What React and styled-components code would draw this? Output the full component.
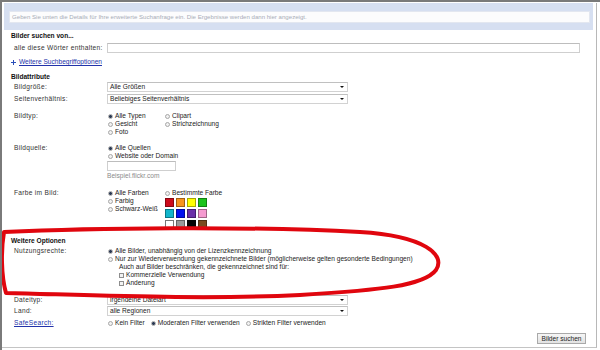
import styled, { createGlobalStyle } from "styled-components"

const GlobalStyle = createGlobalStyle`
  html, body { margin: 0; padding: 0; background: #fff; }
  body { font-family: "Liberation Sans", Arial, sans-serif; font-size: 6.6px; color: #222; }
`

const Frame = styled.div`
  position: relative;
  width: 600px;
  height: 350px;
  box-sizing: border-box;
  border-top: 2px solid #7a7a7a;
  border-left: 2px solid #7a7a7a;
  padding: 1px 3px 2px 0;
  overflow: hidden;
`

const Panel = styled.div`
  box-sizing: border-box;
  height: 345px;
  border-right: 1px solid #b8b8b8;
  border-bottom: 1px solid #c4c4c4;
  padding-right: 3px;
`

const Band = styled.div`
  margin-left: 2px;
  height: 27px;
  background: #d6dff1;
  padding: 8px 3px 0 5px;
  box-sizing: border-box;
`

const Hint = styled.div`
  height: 12px;
  background: #fcfcfd;
  border: 1px solid #e3e7f0;
  box-sizing: border-box;
  color: #a8adb8;
  font-size: 6.1px;
  line-height: 10px;
  padding-left: 2px;
  white-space: nowrap;
  overflow: hidden;
`

const Body = styled.div`
  padding-left: 9px;
  padding-right: 7px;
`

const Heading = styled.div`
  font-weight: bold;
  line-height: 8px;
  margin-top: ${p => p.$top}px;
  color: #111;
`

const Row = styled.div`
  display: grid;
  grid-template-columns: 96px 1fr;
  align-items: ${p => (p.$top ? "start" : "center")};
  min-height: ${p => p.$h || 8}px;
  margin-top: ${p => p.$mt || 0}px;
`

const Label = styled.div`
  padding-left: 3px;
  line-height: 8px;
  letter-spacing: 0.3px;
  white-space: nowrap;
  color: #333;
`

const LinkLabel = styled(Label)`
  color: #2233aa;
  text-decoration: underline;
`

const TextInput = styled.div`
  height: 10px;
  width: ${p => p.$w}px;
  box-sizing: border-box;
  border: 1px solid #cfcfcf;
  border-top-color: #bdbdbd;
  background: #fff;
  margin-top: ${p => p.$mt || 0}px;
`

const Select = styled.div`
  position: relative;
  height: 10px;
  width: 241px;
  box-sizing: border-box;
  border: 1px solid #d2d2d2;
  border-top-color: #c0c0c0;
  line-height: 8px;
  padding-left: 2px;
  &::after {
    content: "";
    position: absolute;
    right: 3px;
    top: 3px;
    border-left: 2px solid transparent;
    border-right: 2px solid transparent;
    border-top: 2px solid #111;
  }
`

const Columns = styled.div`
  display: grid;
  grid-template-columns: 57px 1fr;
  align-items: start;
`

const Stack = styled.div`
  display: flex;
  flex-direction: column;
`

const OptionLine = styled.label`
  display: flex;
  align-items: center;
  height: 8px;
  line-height: 8px;
  white-space: nowrap;
  padding-left: ${p => p.$indent || 1}px;
`

const Radio = styled.span`
  width: 5px;
  height: 5px;
  border-radius: 50%;
  box-sizing: border-box;
  border: 1px solid #a7a7a7;
  background: ${p => (p.$on ? "radial-gradient(circle, #2b3a55 0 1.4px, #e8edf4 1.6px)" : "#f1f1f1")};
  margin-right: 2px;
  flex: none;
`

const Check = styled.span`
  width: 5px;
  height: 5px;
  box-sizing: border-box;
  border: 1px solid #8e8e8e;
  background: #f3f3f3;
  margin-right: 2px;
  flex: none;
`

const Example = styled.div`
  color: #8a8a8a;
  line-height: 8px;
  margin-top: 1px;
`

const MoreLink = styled.div`
  display: flex;
  align-items: center;
  line-height: 8px;
  margin-top: 4px;
  color: #2233aa;
  a { text-decoration: underline; color: inherit; }
`

const Plus = styled.span`
  width: 5px;
  height: 5px;
  position: relative;
  margin-right: 3px;
  &::before, &::after {
    content: "";
    position: absolute;
    background: #2a4fb8;
  }
  &::before { left: 0; top: 2px; width: 5px; height: 1px; }
  &::after { left: 2px; top: 0; width: 1px; height: 5px; }
`

const Swatches = styled.div`
  display: grid;
  grid-template-columns: repeat(4, 9px);
  grid-auto-rows: 9px;
  gap: 2px;
  margin-top: 1px;
  padding-left: 1px;
`

const Swatch = styled.span`
  background: ${p => p.$c};
  box-sizing: border-box;
  border: 1px solid ${p => (p.$c === "#ffffff" ? "#777" : "rgba(0,0,0,0.35)")};
`

const Inline = styled.div`
  display: flex;
  gap: 5px;
`

const Footer = styled.div`
  display: flex;
  justify-content: flex-end;
  margin-top: 6px;
  padding-right: 0;
`

const Button = styled.div`
  height: 11px;
  width: 49px;
  box-sizing: border-box;
  border: 1px solid #a9a9a9;
  background: linear-gradient(#f6f6f6, #e2e2e2);
  text-align: center;
  line-height: 9px;
  color: #222;
`

const Marker = styled.svg`
  position: absolute;
  left: -2px;
  top: -2px;
  pointer-events: none;
`

const colours = [
  "#cc0a1a", "#f7931e", "#ffff00", "#1cc31c",
  "#11b6cc", "#0010f0", "#6b2fa8", "#f59ad0",
  "#ffffff", "#9a9a9a", "#050505", "#7a4a1e",
]

export default function App() {
  return (
    <>
      <GlobalStyle />
      <Frame>
        <Panel>
          <Band>
            <Hint>Geben Sie unten die Details für Ihre erweiterte Suchanfrage ein. Die Ergebnisse werden dann hier angezeigt.</Hint>
          </Band>
          <Body>
            <Heading $top={2}>Bilder suchen von...</Heading>
            <Row $h={12} $mt={2}>
              <Label>alle diese Wörter enthalten:</Label>
              <TextInput $w={473} />
            </Row>
            <MoreLink>
              <Plus />
              <a>Weitere Suchbegriffoptionen</a>
            </MoreLink>

            <Heading $top={7}>Bildattribute</Heading>
            <Row $h={12}>
              <Label>Bildgröße:</Label>
              <Select>Alle Größen</Select>
            </Row>
            <Row $h={12}>
              <Label>Seitenverhältnis:</Label>
              <Select>Beliebiges Seitenverhältnis</Select>
            </Row>

            <Row $top $mt={7}>
              <Label>Bildtyp:</Label>
              <Columns>
                <Stack>
                  <OptionLine><Radio $on />Alle Typen</OptionLine>
                  <OptionLine><Radio />Gesicht</OptionLine>
                  <OptionLine><Radio />Foto</OptionLine>
                </Stack>
                <Stack>
                  <OptionLine><Radio />Clipart</OptionLine>
                  <OptionLine><Radio />Strichzeichnung</OptionLine>
                </Stack>
              </Columns>
            </Row>

            <Row $top $mt={8}>
              <Label>Bildquelle:</Label>
              <Stack>
                <OptionLine><Radio $on />Alle Quellen</OptionLine>
                <OptionLine><Radio />Website oder Domain</OptionLine>
                <TextInput $w={69} $mt={1} />
                <Example>Beispiel.flickr.com</Example>
              </Stack>
            </Row>

            <Row $top $mt={9}>
              <Label>Farbe im Bild:</Label>
              <Columns>
                <Stack>
                  <OptionLine><Radio $on />Alle Farben</OptionLine>
                  <OptionLine><Radio />Farbig</OptionLine>
                  <OptionLine><Radio />Schwarz-Weiß</OptionLine>
                </Stack>
                <Stack>
                  <OptionLine><Radio />Bestimmte Farbe</OptionLine>
                  <Swatches>
                    {colours.map(c => <Swatch key={c} $c={c} />)}
                  </Swatches>
                </Stack>
              </Columns>
            </Row>

            <Heading $top={8}>Weitere Optionen</Heading>
            <Row $top $mt={2}>
              <Label>Nutzungsrechte:</Label>
              <Stack>
                <OptionLine><Radio $on />Alle Bilder, unabhängig von der Lizenzkennzeichnung</OptionLine>
                <OptionLine><Radio />Nur zur Wiederverwendung gekennzeichnete Bilder (möglicherweise gelten gesonderte Bedingungen)</OptionLine>
                <OptionLine $indent={12}>Auch auf Bilder beschränken, die gekennzeichnet sind für:</OptionLine>
                <OptionLine $indent={12}><Check />Kommerzielle Verwendung</OptionLine>
                <OptionLine $indent={12}><Check />Änderung</OptionLine>
              </Stack>
            </Row>

            <Row $h={11} $mt={7}>
              <Label>Dateityp:</Label>
              <Select>irgendeine Dateiart</Select>
            </Row>
            <Row $h={11}>
              <Label>Land:</Label>
              <Select>alle Regionen</Select>
            </Row>
            <Row $mt={3}>
              <LinkLabel>SafeSearch:</LinkLabel>
              <Inline>
                <OptionLine><Radio />Kein Filter</OptionLine>
                <OptionLine><Radio $on />Moderaten Filter verwenden</OptionLine>
                <OptionLine><Radio />Strikten Filter verwenden</OptionLine>
              </Inline>
            </Row>

            <Footer>
              <Button>Bilder suchen</Button>
            </Footer>
          </Body>
        </Panel>

        <Marker width="600" height="350" viewBox="0 0 600 350">
          <path
            d="M 4 232 C 90 228, 250 226, 360 232 C 425 236, 446 255, 436 270 C 424 286, 380 290, 300 295 C 200 300, 90 295, 6 293 C 1 275, 1 250, 4 232 Z"
            fill="none"
            stroke="#e0060e"
            strokeWidth="4"
            strokeLinejoin="round"
          />
        </Marker>
      </Frame>
    </>
  )
}
